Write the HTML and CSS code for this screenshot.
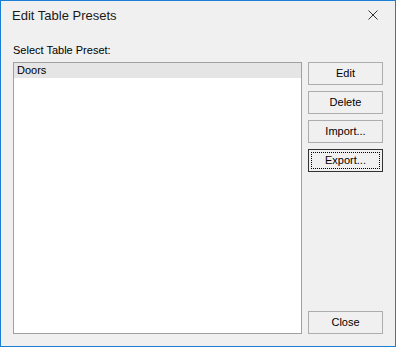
FILE: index.html
```html
<!DOCTYPE html>
<html>
<head>
<meta charset="utf-8">
<link rel="stylesheet" href="styles.css">
</head>
<body>
<div class="window">
  <div class="titlebar">
    <span class="title">Edit Table Presets</span>
    <svg class="close-x" width="10" height="10" viewBox="0 0 10 10">
      <path d="M0.5 0.5 L9.5 9.5 M9.5 0.5 L0.5 9.5" stroke="#333" stroke-width="1" fill="none"/>
    </svg>
  </div>
  <div class="content">
    <div class="label">Select Table Preset:</div>
    <div class="main">
      <div class="listbox">
        <div class="item selected">Doors</div>
      </div>
      <div class="buttons">
        <div class="btn">Edit</div>
        <div class="btn">Delete</div>
        <div class="btn">Import...</div>
        <div class="btn default"><span class="focus">Export...</span></div>
        <div class="btn close">Close</div>
      </div>
    </div>
  </div>
</div>
</body>
</html>
```

FILE: styles.css
```css
html, body {
  margin: 0;
  padding: 0;
}
body {
  font-family: "Liberation Sans", Arial, sans-serif;
  font-size: 11px;
  color: #000;
}
.window {
  width: 396px;
  height: 347px;
  box-sizing: border-box;
  border: 1px solid #1a7fd4;
  background: #f0f0f0;
  display: flex;
  flex-direction: column;
}
.titlebar {
  height: 30px;
  display: flex;
  justify-content: space-between;
  align-items: flex-start;
  padding-left: 11px;
  padding-right: 17px;
}
.title {
  font-size: 13px;
  line-height: 30px;
  color: #1a1a1a;
}
.close-x {
  margin-top: 9px;
  display: block;
}
.content {
  flex: 1;
  display: flex;
  flex-direction: column;
  padding: 13px 12px 12px 12px;
}
.label {
  line-height: 13px;
  height: 13px;
  margin-bottom: 5px;
}
.main {
  flex: 1;
  display: flex;
  gap: 6px;
}
.listbox {
  flex: 1;
  background: #fff;
  border: 1px solid #a0a0a0;
}
.item {
  height: 15px;
  line-height: 15px;
  padding-left: 3px;
}
.item.selected {
  background: #e5e5e5;
}
.buttons {
  width: 75px;
  display: flex;
  flex-direction: column;
  gap: 6px;
}
.btn {
  height: 23px;
  box-sizing: border-box;
  border: 1px solid #adadad;
  background: #f0f0f0;
  display: flex;
  align-items: center;
  justify-content: center;
  line-height: 13px;
}
.btn.default {
  border-color: #333;
  padding: 2px;
}
.btn.default .focus {
  flex: 1;
  align-self: stretch;
  border: 1px dotted #000;
  display: flex;
  align-items: center;
  justify-content: center;
}
.btn.close {
  margin-top: auto;
}
```
